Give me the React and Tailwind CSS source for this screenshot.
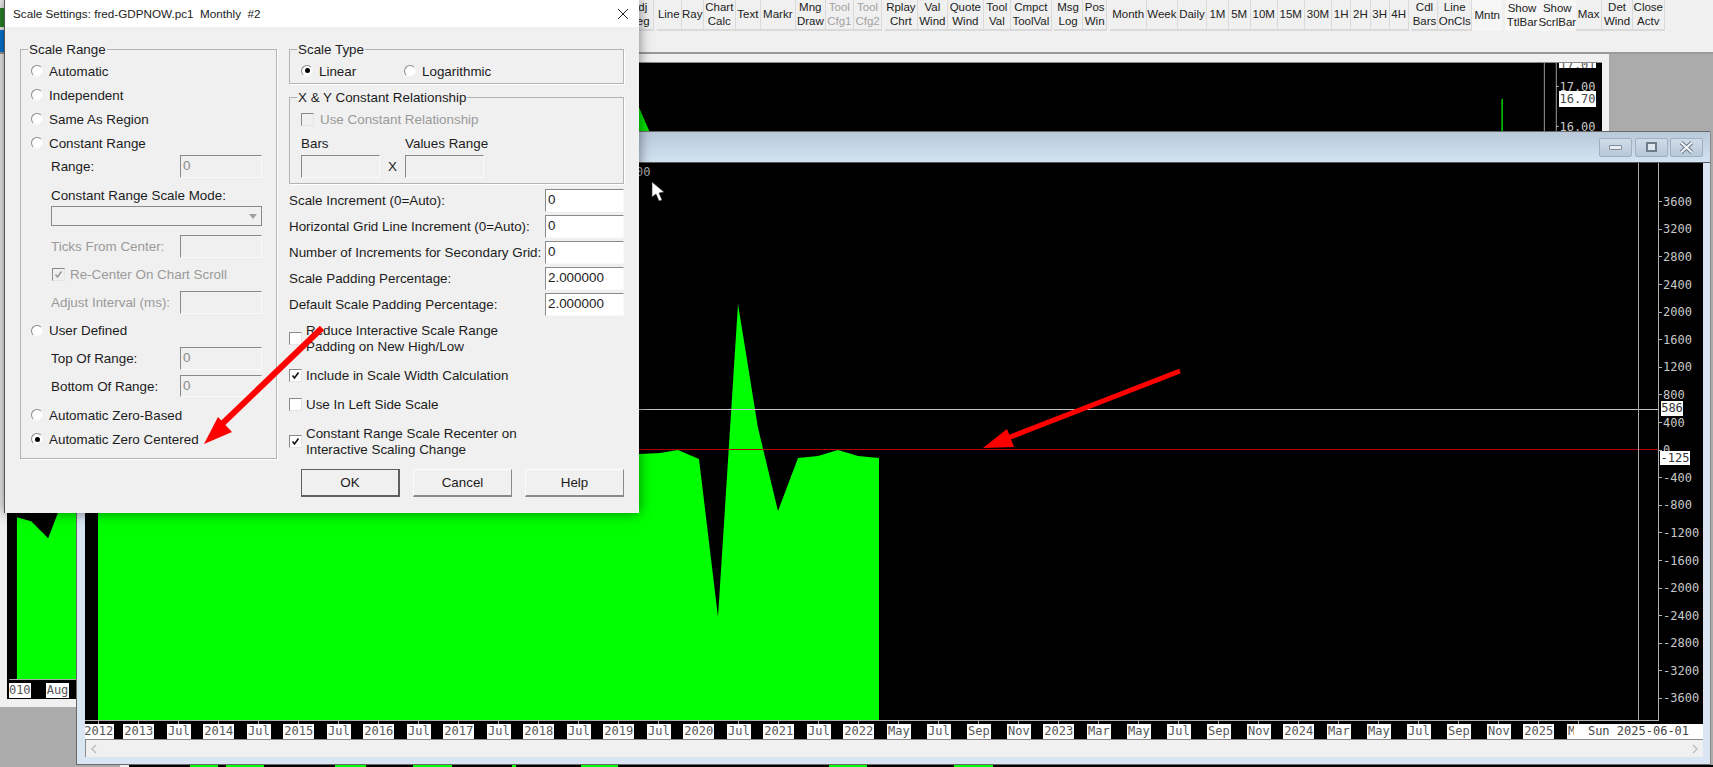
const SANS = "font-['Liberation_Sans',Arial,sans-serif]";
const MONO = "font-['DejaVu_Sans_Mono',monospace]";

const toolbar = [
  [{ a: 'Adj', b: 'Reg', w: 'w-[29px]' }],
  [
    { a: 'Line', w: 'w-[25px]' },
    { a: 'Ray', w: 'w-[22px]' },
    { a: 'Chart', b: 'Calc', w: 'w-[32px]' },
    { a: 'Text', w: 'w-[25px]' },
    { a: 'Markr', w: 'w-[35px]' },
    { a: 'Mng', b: 'Draw', w: 'w-[30px]' },
    { a: 'Tool', b: 'Cfg1', w: 'w-[28px]', off: true },
    { a: 'Tool', b: 'Cfg2', w: 'w-[28.5px]', off: true },
  ],
  [
    { a: 'Rplay', b: 'Chrt', w: 'w-[32.5px]' },
    { a: 'Val', b: 'Wind', w: 'w-[30.5px]' },
    { a: 'Quote', b: 'Wind', w: 'w-[35.5px]' },
    { a: 'Tool', b: 'Val', w: 'w-[27.5px]' },
    { a: 'Cmpct', b: 'ToolVal', w: 'w-[40.5px]' },
  ],
  [
    { a: 'Msg', b: 'Log', w: 'w-[28.5px]' },
    { a: 'Pos', b: 'Win', w: 'w-[24.5px]' },
  ],
  [
    { a: 'Month', w: 'w-[37px]' },
    { a: 'Week', w: 'w-[30.5px]' },
    { a: 'Daily', w: 'w-[29.5px]' },
    { a: '1M', w: 'w-[21.5px]' },
    { a: '5M', w: 'w-[22px]' },
    { a: '10M', w: 'w-[27px]' },
    { a: '15M', w: 'w-[27px]' },
    { a: '30M', w: 'w-[27.5px]' },
    { a: '1H', w: 'w-[19px]' },
    { a: '2H', w: 'w-[19.5px]' },
    { a: '3H', w: 'w-[19px]' },
    { a: '4H', w: 'w-[19px]' },
  ],
  [
    { a: 'Cdl', b: 'Bars', w: 'w-[27px]' },
    { a: 'Line', b: 'OnCls', w: 'w-[33.5px]' },
    { a: 'Mntn', w: 'w-[30.5px]', on: true },
  ],
  [
    { a: 'Show', b: 'TtlBar', w: 'w-[33.5px]', on: true },
    { a: 'Show', b: 'ScrlBar', w: 'w-[37px]', on: true },
    { a: 'Max', w: 'w-[26.5px]' },
    { a: 'Det', b: 'Wind', w: 'w-[30.5px]' },
    { a: 'Close', b: 'Actv', w: 'w-[32px]' },
  ],
];

function Toolbar() {
  return (
    <div className="h-[54px] shrink-0 bg-[#f0f0f0] border-b-2 border-[#9a9a9a] flex items-start pl-[625px] gap-[2.8px]">
      {toolbar.map((g, i) => (
        <div key={i} className="flex h-[31px]">
          {g.map((b, j) => (
            <div
              key={j}
              className={`${b.w} h-[31px] flex flex-col items-center justify-center text-[11.5px] leading-[13.5px] whitespace-nowrap ${
                b.on ? 'bg-[#f6f6f6]' : 'border-r border-b-2 border-[#dadada]'
              } ${b.off ? 'text-[#a2a2a2]' : 'text-[#222]'}`}
            >
              <span>{b.a}</span>
              {b.b && <span>{b.b}</span>}
            </div>
          ))}
        </div>
      ))}
    </div>
  );
}

function Radio({ on }) {
  return (
    <span className="w-[12px] h-[12px] shrink-0 rounded-full bg-white border border-t-[#8a8a8a] border-l-[#8a8a8a] border-r-[#f4f4f4] border-b-[#f4f4f4] flex items-center justify-center">
      {on && <span className="w-[5px] h-[5px] rounded-full bg-black" />}
    </span>
  );
}

function Check({ on, off }) {
  return (
    <span
      className={`w-[13px] h-[13px] shrink-0 border border-t-[#8a8a8a] border-l-[#8a8a8a] border-r-[#e4e4e4] border-b-[#e4e4e4] flex items-center justify-center ${
        off ? 'bg-[#f0f0f0]' : 'bg-white'
      }`}
    >
      {on && (
        <svg width="9" height="9" viewBox="0 0 9 9">
          <path d="M1.5 4.5 L3.5 7 L7.5 1.5" fill="none" stroke={off ? '#9a9a9a' : '#111'} strokeWidth="1.6" />
        </svg>
      )}
    </span>
  );
}

function Box({ w, h = 'h-[23px]', text, off }) {
  return (
    <div
      className={`${w} ${h} shrink-0 border border-t-[#8a8a8a] border-l-[#8a8a8a] border-r-[#fafafa] border-b-[#fafafa] pl-[2px] leading-[20px] ${
        off ? 'bg-[#f0f0f0] text-[#8a8a8a]' : 'bg-white text-[#222]'
      }`}
    >
      {text}
    </div>
  );
}

function Group({ title, className, children }) {
  return (
    <div className={`relative border border-[#b4b4b4] shadow-[1px_1px_0_#ffffff] ${className}`}>
      <span className="absolute -top-[8px] left-[7px] bg-[#f0f0f0] px-[1px] leading-[16px] whitespace-nowrap">{title}</span>
      {children}
    </div>
  );
}

function RadioRow({ label, on }) {
  return (
    <div className="h-6 flex items-center pl-[10px] gap-[6px]">
      <Radio on={on} />
      <span className="pt-[2px]">{label}</span>
    </div>
  );
}

function BoxRow({ label, off, text, cls = 'h-[23px]', dim }) {
  return (
    <div className={`${cls} flex items-center pl-[30px]`}>
      <span className={`w-[129px] pt-[2px] ${dim ? 'text-[#9a9a9a]' : ''}`}>{label}</span>
      <Box w="w-[82px]" h={cls} text={text} off={off} />
    </div>
  );
}

function FieldRow({ label, value }) {
  return (
    <div className="h-[23px] mb-[3px] flex items-center justify-between">
      <span className="whitespace-nowrap pt-[2px]">{label}</span>
      <Box w="w-[79px]" text={value} />
    </div>
  );
}

function CheckRow({ cls, on, children }) {
  return (
    <div className={`${cls} flex items-center gap-[4px]`}>
      <Check on={on} />
      <span className="leading-[16.5px] whitespace-nowrap pt-[2px]">{children}</span>
    </div>
  );
}

function Dialog() {
  return (
    <div className={`${SANS} absolute left-[4px] top-0 w-[635px] h-[513px] bg-[#f0f0f0] text-[13.4px] text-[#1c1c1c] border-l border-[#555] shadow-[0_0_12px_rgba(0,0,0,0.5)] z-20`}>
      <div className="h-[27px] bg-white flex items-center justify-between pl-[8px] pr-[10px]">
        <span className="text-[11.7px] whitespace-pre">Scale Settings: fred-GDPNOW.pc1  Monthly  #2</span>
        <svg width="12" height="12" viewBox="0 0 12 12">
          <path d="M1 1 L11 11 M11 1 L1 11" stroke="#222" strokeWidth="1" fill="none" />
        </svg>
      </div>
      <div className="flex pt-[22px] pl-[15px] gap-[12px]">
        <Group title="Scale Range" className="w-[257px] h-[410px] pt-[9px]">
          <RadioRow label="Automatic" />
          <RadioRow label="Independent" />
          <RadioRow label="Same As Region" />
          <RadioRow label="Constant Range" />
          <BoxRow label="Range:" text="0" off />
          <div className="h-[28px] pt-[9px] pl-[30px] leading-[18px]">Constant Range Scale Mode:</div>
          <div className="pl-[30px]">
            <div className="w-[211px] h-[20px] border border-[#8a8a8a] flex justify-end">
              <div className="w-[16px] h-full flex items-center justify-center">
                <span className="w-0 h-0 border-l-[4px] border-r-[4px] border-t-[5px] border-l-transparent border-r-transparent border-t-[#a0a0a0]" />
              </div>
            </div>
          </div>
          <div className="mt-[9px]">
            <BoxRow label="Ticks From Center:" off dim />
          </div>
          <div className="h-[33px] flex items-center pl-[31px] gap-[5px] text-[#9a9a9a]">
            <Check on off />
            <span className="pt-[2px]">Re-Center On Chart Scroll</span>
          </div>
          <BoxRow label="Adjust Interval (ms):" off dim />
          <div className="h-[33px] flex items-center pl-[10px] gap-[6px]">
            <Radio />
            <span className="pt-[2px]">User Defined</span>
          </div>
          <BoxRow label="Top Of Range:" text="0" off />
          <div className="mt-[5px]">
            <BoxRow label="Bottom Of Range:" text="0" off cls="h-[22px]" />
          </div>
          <div className="mt-[6px]">
            <RadioRow label="Automatic Zero-Based" />
            <RadioRow label="Automatic Zero Centered" on />
          </div>
        </Group>

        <div className="w-[335px]">
          <Group title="Scale Type" className="h-[35px] pt-[9px] pl-[11px]">
            <div className="h-6 flex items-center">
              <div className="w-[103px] flex items-center gap-[6px]">
                <Radio on />
                <span className="pt-[2px]">Linear</span>
              </div>
              <div className="flex items-center gap-[6px]">
                <Radio />
                <span className="pt-[2px]">Logarithmic</span>
              </div>
            </div>
          </Group>
          <Group title="X & Y Constant Relationship" className="h-[87px] mt-[13px] pt-[9px] pl-[11px]">
            <div className="h-6 flex items-center gap-[6px] text-[#9a9a9a]">
              <Check off />
              <span className="pt-[2px]">Use Constant Relationship</span>
            </div>
            <div className="h-6 flex items-center pt-[2px]">
              <span className="w-[104px]">Bars</span>
              <span>Values Range</span>
            </div>
            <div className="flex items-center">
              <Box w="w-[79px]" off />
              <span className="w-[25px] text-center pt-[2px]">X</span>
              <Box w="w-[79px]" off />
            </div>
          </Group>
          <div className="mt-[5px]">
            <FieldRow label="Scale Increment (0=Auto):" value="0" />
            <FieldRow label="Horizontal Grid Line Increment (0=Auto):" value="0" />
            <FieldRow label="Number of Increments for Secondary Grid:" value="0" />
            <FieldRow label="Scale Padding Percentage:" value="2.000000" />
            <FieldRow label="Default Scale Padding Percentage:" value="2.000000" />
          </div>
          <div className="mt-[5px]">
            <CheckRow cls="h-[34px]">
              Reduce Interactive Scale Range
              <br />
              Padding on New High/Low
            </CheckRow>
            <CheckRow cls="h-6 mt-[8px]" on>
              Include in Scale Width Calculation
            </CheckRow>
            <CheckRow cls="h-6 mt-[5px]">Use In Left Side Scale</CheckRow>
            <CheckRow cls="h-[34px] mt-[8px]" on>
              Constant Range Scale Recenter on
              <br />
              Interactive Scaling Change
            </CheckRow>
          </div>
          <div className="mt-[11px] pl-[12px] flex gap-[13px]">
            <div className="w-[99px] h-[28px] pt-[2px] border border-[#5f5f5f] border-r-2 border-b-2 flex items-center justify-center">OK</div>
            <div className="w-[99px] h-[28px] pt-[2px] border border-[#fbfbfb] border-r-[#8a8a8a] border-b-[#8a8a8a] border-b-2 flex items-center justify-center">Cancel</div>
            <div className="w-[99px] h-[28px] pt-[2px] border border-[#fbfbfb] border-r-[#8a8a8a] border-b-[#8a8a8a] border-b-2 flex items-center justify-center">Help</div>
          </div>
        </div>
      </div>
    </div>
  );
}

function BackChart() {
  return (
    <div className="w-[1609px] h-[653px] bg-[#f0f0f0] px-[7px] pt-[8px] pb-[8px]">
      <div className={`${MONO} relative w-[1595px] h-[637px] bg-black border-t border-[#8a8a8a] overflow-hidden`}>
        <svg className="absolute inset-0 w-full h-full" viewBox="7 63 1595 637">
          <polygon points="15.7,500 76,500 76,680 15.7,680" fill="#00ff00" />
          <polygon points="15.7,500 15.7,518 30,522 47,539 60,505 60,500" fill="#000000" />
          <polygon points="630,95 639,108 649,131 630,131" fill="#00e000" />
          <rect x="1502.5" y="99" width="1.5" height="34" fill="#00d000" />
          <rect x="1545" y="63" width="1" height="80" fill="#9a9a9a" />
          <rect x="1557" y="63" width="1" height="80" fill="#9a9a9a" />
          <rect x="8" y="680" width="70" height="1" fill="#b0b0b0" />
          <rect x="1557" y="86" width="3" height="1" fill="#b0b0b0" />
          <rect x="1557" y="126" width="3" height="1" fill="#b0b0b0" />
        </svg>
        <div className="absolute left-[1552px] top-[0px] w-[37px] h-[5px] bg-white overflow-hidden text-[12px] leading-[5px] text-[#555] text-center">17.01</div>
        <div className="absolute left-[1552px] top-[16px] text-[12px] text-[#c8c8c8] text-center w-[37px] leading-[16px]">17.00</div>
        <div className="absolute left-[1552px] top-[28px] w-[37px] h-[16px] bg-white text-[12px] leading-[16px] text-[#444] text-center">16.70</div>
        <div className="absolute left-[1552px] top-[56px] text-[12px] text-[#c8c8c8] text-center w-[37px] leading-[16px]">16.00</div>
        <div className="absolute left-[1.5px] top-[620px] w-[22.5px] h-[15px] bg-white text-[12px] leading-[15px] text-[#555] text-center overflow-hidden">010</div>
        <div className="absolute left-[39px] top-[620px] w-[23px] h-[15px] bg-white text-[12px] leading-[15px] text-[#555] text-center">Aug</div>
      </div>
    </div>
  );
}

const xLabels = ['2012','2013','Jul','2014','Jul','2015','Jul','2016','Jul','2017','Jul','2018','Jul','2019','Jul','2020','Jul','2021','Jul','2022','May','Jul','Sep','Nov','2023','Mar','May','Jul','Sep','Nov','2024','Mar','May','Jul','Sep','Nov','2025','Mar'];
const yLabels = ['3600','3200','2800','2400','2000','1600','1200','800','400','0','-400','-800','-1200','-1600','-2000','-2400','-2800','-3200','-3600'];

function WinBtn({ children }) {
  return (
    <div className="w-[33px] h-[19px] rounded-[2px] border border-[#9fb0c2] bg-gradient-to-b from-[#d0dce8] to-[#b8c8d8] flex items-center justify-center">
      {children}
    </div>
  );
}

function MainWindow() {
  return (
    <div className="absolute left-[76px] top-[131px] w-[1635px] h-[634px] flex flex-col bg-[#d9e5f2] border border-[#6a6a6a] border-r-[#8a8a8a] z-10 rounded-t-[2px]">
      <div className="h-[31px] shrink-0 bg-gradient-to-b from-[#b9c9da] to-[#d3e3f2] border-b border-[#5a5a5a] flex items-center justify-end pr-[7px] gap-[2.5px]">
        <WinBtn>
          <span className="w-[13px] h-[5px] bg-[#e8eef4] border border-[#7d8b99] rounded-[1px]" />
        </WinBtn>
        <WinBtn>
          <span className="w-[11px] h-[10px] border-2 border-[#6f7d8b] bg-[#dfe7ef]" />
        </WinBtn>
        <WinBtn>
          <svg width="15" height="13" viewBox="0 0 15 13">
            <path d="M2 1.5 L13 11.5 M13 1.5 L2 11.5" stroke="#6a7886" strokeWidth="4" fill="none" />
            <path d="M2 1.5 L13 11.5 M13 1.5 L2 11.5" stroke="#f4f7fa" strokeWidth="2" fill="none" />
          </svg>
        </WinBtn>
      </div>
      <div className="pl-[8px] pr-[7px] flex-1 flex flex-col">
        <div className={`${MONO} relative h-[576px] bg-black overflow-hidden`}>
          <div className="flex h-[558px]">
            <div className="relative w-[1574px] h-[558px] border-r border-b border-[#b0b0b0]">
              <svg className="absolute inset-0 w-full h-full" viewBox="85 163 1573 557">
                <polygon
                  points="98,720 98,454 640,454 660,453 678,450 699,459 718,617 738,304 758,428 778,511 798,458 818,456 838,450 858,456 879,458 879,720"
                  fill="#00ff00"
                />
                <rect x="85" y="409" width="1573" height="1" fill="#c4c4c4" />
                <rect x="85" y="449" width="1573" height="1" fill="#b00000" />
                <rect x="1638" y="163" width="1" height="557" fill="#a8a8a8" />
              </svg>
              <span className="absolute left-[551px] top-[2px] text-[12px] leading-[14px] text-[#b0b0b0]">00</span>
            </div>
            <div className="pt-[25px] text-[12px] text-[#c8c8c8]">
              {yLabels.map((l) => (
                <div key={l} className="h-[27.6px] flex items-center">
                  <span className="w-[3px] h-px bg-[#b0b0b0]" />
                  <span className="ml-[1px]">{l}</span>
                </div>
              ))}
            </div>
          </div>
          <div className="h-[18px] flex -ml-[6.2px] overflow-visible">
            {xLabels.map((l, i) => (
              <div key={i} className="w-[40px] shrink-0 flex flex-col items-center">
                <span className="w-px h-[3px] bg-[#b0b0b0]" />
                <span className="h-[15px] px-[1px] bg-white text-[12px] leading-[15px] text-[#555]">{l}</span>
              </div>
            ))}
          </div>
          <div className="absolute left-[1576px] top-[238px] w-[22px] h-[15px] bg-white text-[12px] leading-[15px] text-[#333] text-center">586</div>
          <div className="absolute left-[1575px] top-[288px] w-[30px] h-[14px] bg-white text-[12px] leading-[14px] text-[#333] text-center">-125</div>
          <div className="absolute left-[1489px] top-[561px] w-[129px] h-[15px] bg-white text-[12px] leading-[14px] text-[#444] text-center">Sun 2025-06-01</div>
        </div>
        <div className="h-[18px] bg-[#f0f0f0] border-t border-l border-[#8a8a8a] flex items-center justify-between px-[4px]">
          <svg width="8" height="10" viewBox="0 0 8 10">
            <path d="M6 1 L2 5 L6 9" fill="none" stroke="#c0c0c0" strokeWidth="1.5" />
          </svg>
          <svg width="8" height="10" viewBox="0 0 8 10">
            <path d="M2 1 L6 5 L2 9" fill="none" stroke="#c0c0c0" strokeWidth="1.5" />
          </svg>
        </div>
      </div>
    </div>
  );
}

function Overlay() {
  return (
    <svg className="absolute inset-0 w-[1713px] h-[767px] z-30 pointer-events-none" viewBox="0 0 1713 767">
      <path d="M322 328 L222 424" stroke="#ff0000" strokeWidth="6" fill="none" />
      <polygon points="204,444 218,417 232,432" fill="#ff0000" />
      <path d="M1180 371 L1005 439" stroke="#ff0000" strokeWidth="5" fill="none" />
      <polygon points="983,448 1007,429 1014,447" fill="#ff0000" />
      <polygon points="652,182 652,197 656,194 659,201 662,200 659,193 664,192" fill="#ffffff" stroke="#333" strokeWidth="0.6" />
    </svg>
  );
}

function Strip() {
  return (
    <>
      <div className="absolute left-0 top-[8px] w-[4px] h-[19px] bg-[#2a8a2a] z-0" />
      <div className="absolute left-0 top-[30px] w-[4px] h-[22px] bg-[#0078d7] z-0" />
      <svg className="absolute left-0 top-[765px] w-[1713px] h-[2px]" viewBox="0 0 1713 2">
        <rect x="129" y="0" width="1584" height="2" fill="#000" />
        <rect x="120" y="0" width="9" height="2" fill="#f0f0f0" />
        {[[190,28],[226,38],[335,31],[413,39],[512,4],[581,37],[829,38],[954,39]].map(([x, w]) => (
          <rect key={x} x={x} y="0" width={w} height="2" fill="#00ff00" />
        ))}
      </svg>
    </>
  );
}

export default function App() {
  return (
    <div className={`${SANS} relative w-[1713px] h-[767px] overflow-hidden bg-[#ababab] flex flex-col`}>
      <Toolbar />
      <BackChart />
      <Strip />
      <MainWindow />
      <Dialog />
      <Overlay />
    </div>
  );
}
